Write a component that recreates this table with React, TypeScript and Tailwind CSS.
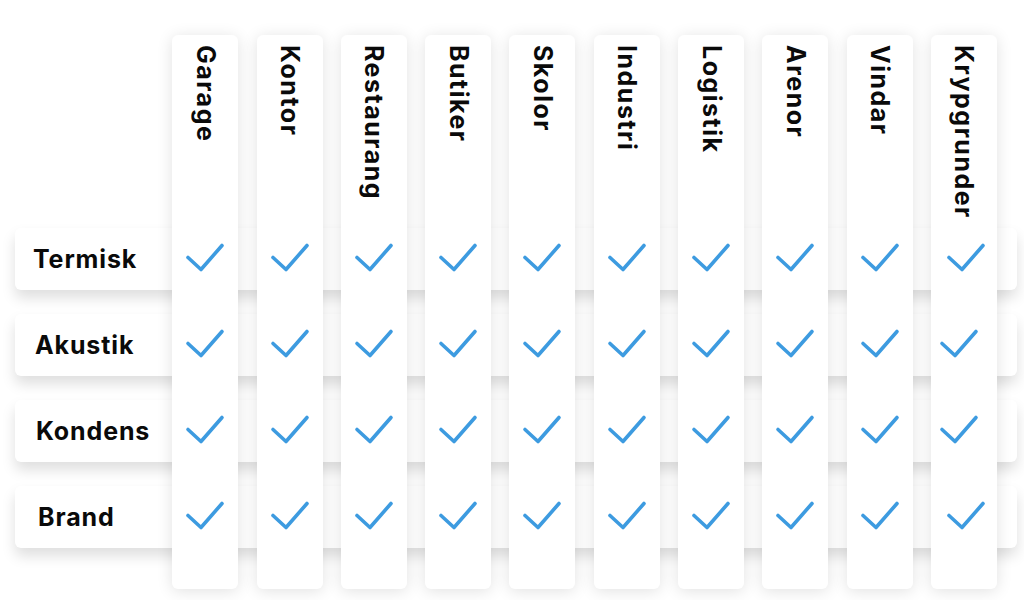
import React from 'react';

const columns = ['Garage', 'Kontor', 'Restaurang', 'Butiker', 'Skolor', 'Industri', 'Logistik', 'Arenor', 'Vindar', 'Krypgrunder'];

// row label indent varies slightly in the original
const rows = [
  { label: 'Termisk', indent: 'pl-[18px]', row: 'row-start-2' },
  { label: 'Akustik', indent: 'pl-[20px]', row: 'row-start-3' },
  { label: 'Kondens', indent: 'pl-[21px]', row: 'row-start-4' },
  { label: 'Brand', indent: 'pl-[23px]', row: 'row-start-5' },
];

const colStart = [
  'col-start-2', 'col-start-3', 'col-start-4', 'col-start-5', 'col-start-6',
  'col-start-7', 'col-start-8', 'col-start-9', 'col-start-10', 'col-start-11',
];

const Check: React.FC<{ className?: string }> = ({ className }) => (
  <svg width="40" height="31" viewBox="0 0 40 31" fill="none" className={className}>
    <path d="M3 15.5 L16 27.5 L37 3.5" stroke="#3d9be0" strokeWidth="3.6" strokeLinecap="round" strokeLinejoin="round" />
  </svg>
);

const App: React.FC = () => {
  return (
    <div className="w-[1024px] h-[600px] bg-white overflow-hidden font-['Inter',sans-serif] text-[#0a0a0a]">
      <div className="grid grid-cols-[139px_repeat(10,66px)_0px] grid-rows-[169px_repeat(4,62px)_17px] gap-x-[18.3px] gap-y-[24px] ml-[15px] mt-[35px] w-[1000px]">
        {/* row cards */}
        {rows.map((r) => (
          <div
            key={r.label}
            className={`${r.row} col-start-1 col-end-13 -mr-[2px] z-0 bg-white rounded-md shadow-[0_8px_14px_rgba(0,0,0,0.13)] flex items-center ${r.indent}`}
          >
            <span className="text-[25px] font-bold tracking-[0.035em] leading-none">{r.label}</span>
          </div>
        ))}

        {/* column cards */}
        {columns.map((c, i) => (
          <div
            key={c}
            className={`${colStart[i]} row-start-1 row-end-7 z-10 bg-white rounded-md shadow-[0_2px_16px_rgba(0,0,0,0.12)] grid grid-rows-[169px_repeat(4,62px)_17px] gap-y-[24px]`}
          >
            <div className="flex justify-center pt-[10px]">
              <span className="[writing-mode:vertical-rl] text-[25px] font-bold tracking-[0.06em] leading-none">{c}</span>
            </div>
            {rows.map((r, j) => (
              <div key={r.label} className="flex items-center justify-center pb-[4px]">
                <Check className={i === 9 && (j === 1 || j === 2) ? '-ml-[9px]' : i === 9 ? 'ml-[4px]' : ''} />
              </div>
            ))}
          </div>
        ))}
      </div>
    </div>
  );
};

export default App;
